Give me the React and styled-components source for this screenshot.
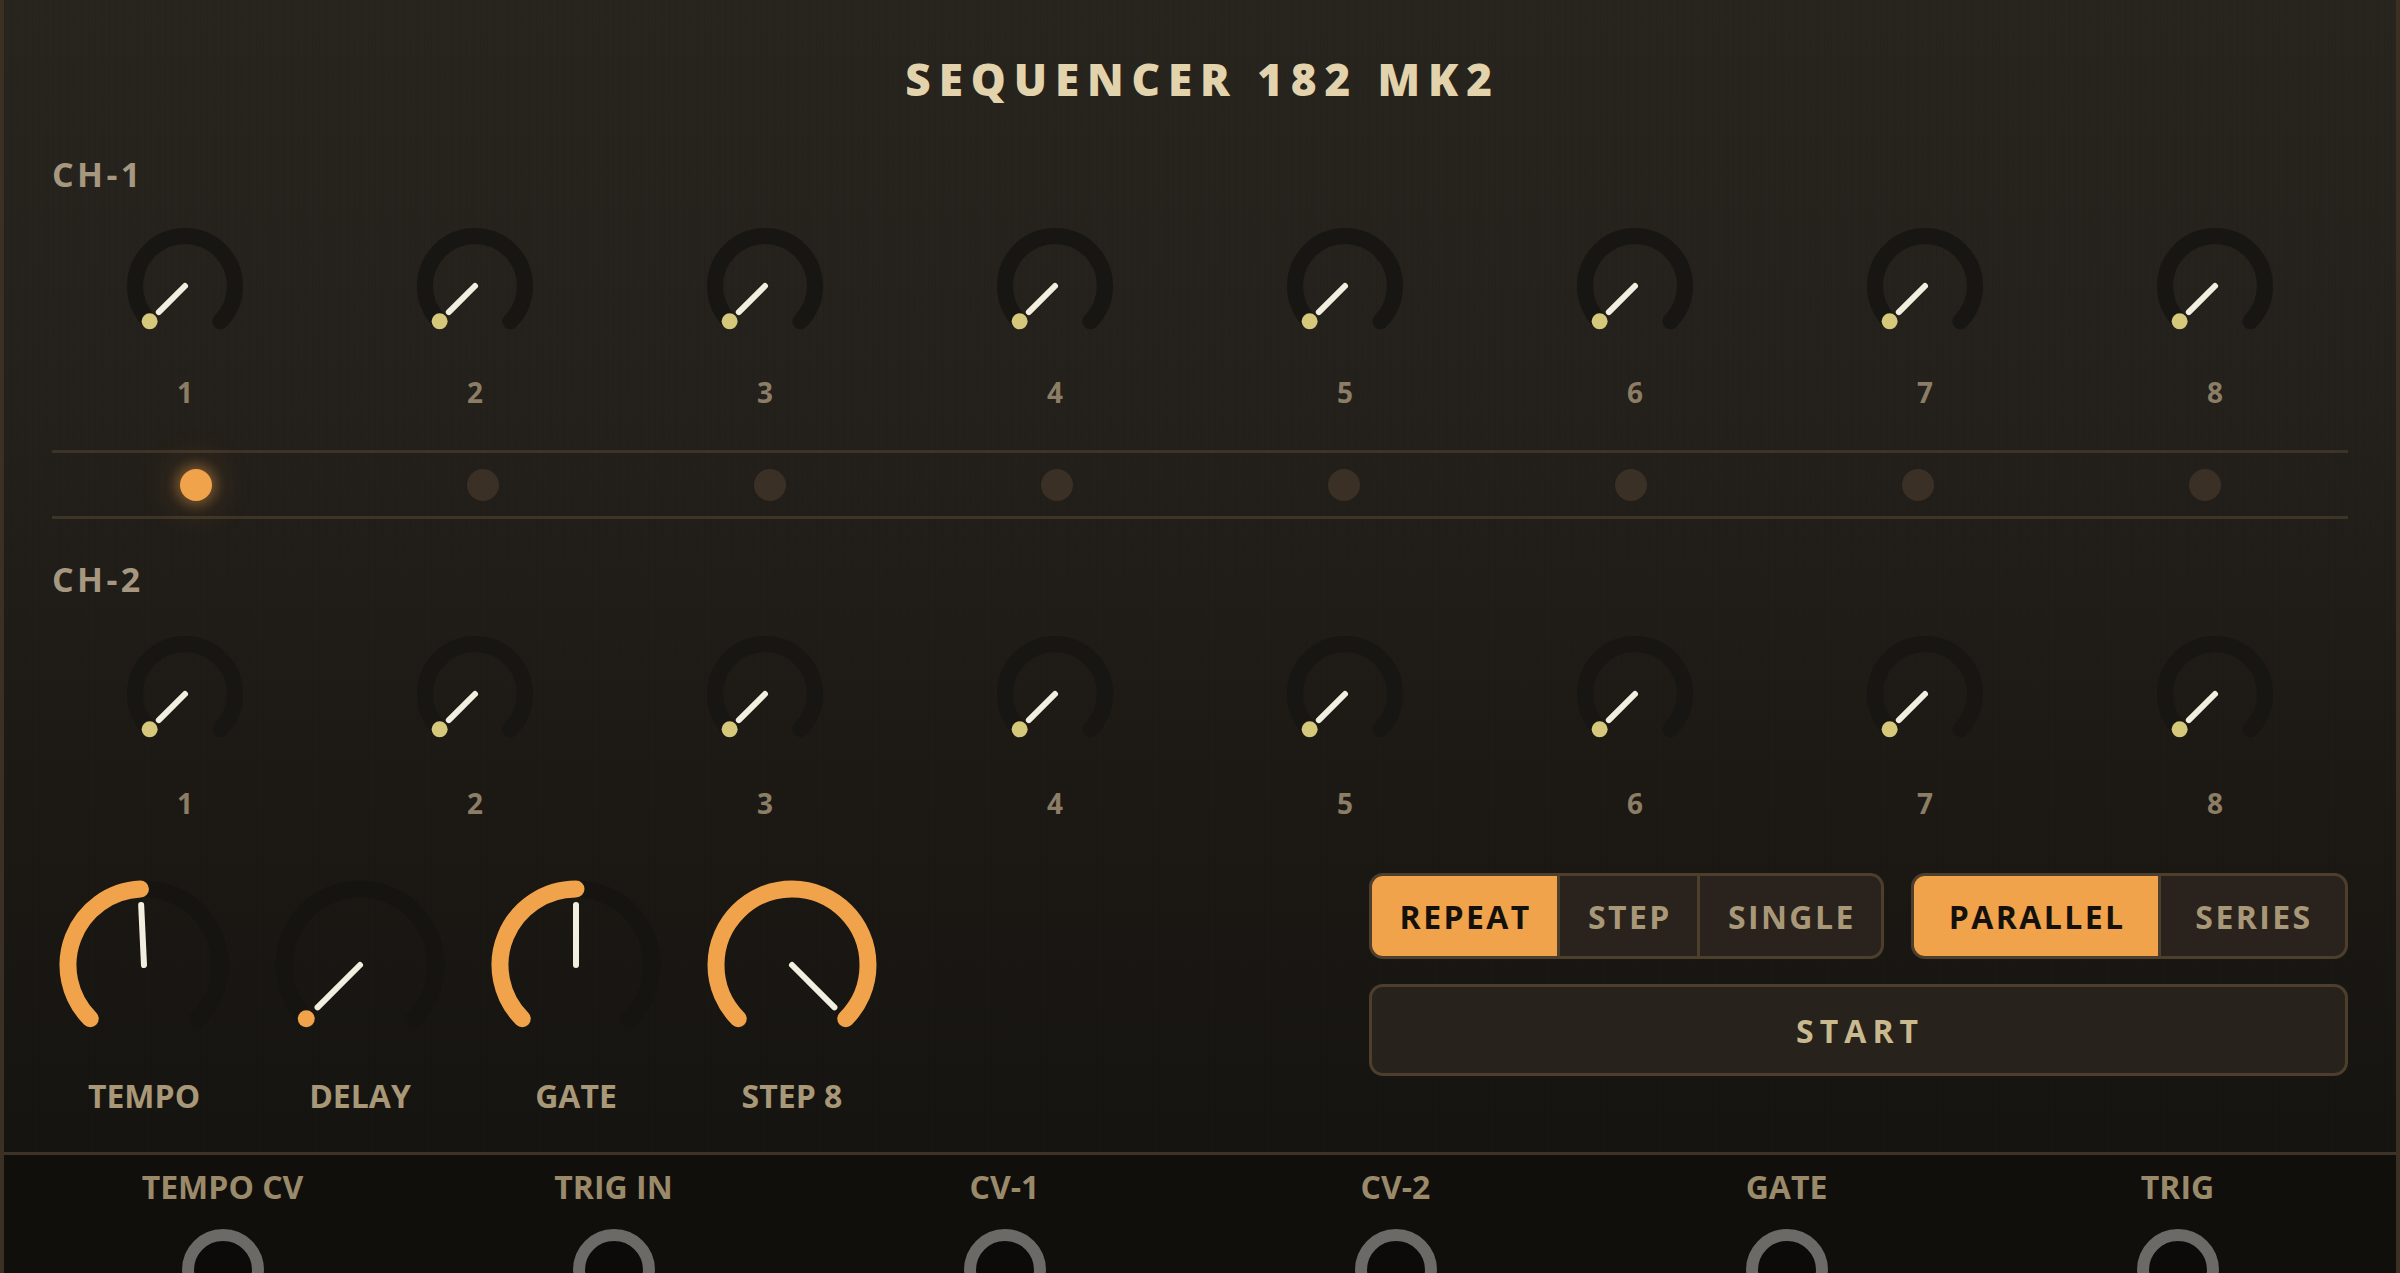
import React from 'react'
import styled, { createGlobalStyle } from 'styled-components'

const Global = createGlobalStyle`
  * { box-sizing: border-box; }
  body {
    margin: 0;
    background: #110f0c;
    font-family: "Open Sans", "Noto Sans", sans-serif;
  }
`

const ORANGE = '#f0a34b'

const Panel = styled.div`
  width: 100%;
  border-left: 4px solid #3a3024;
  border-right: 4px solid #3a3024;
  background: #110f0c;
`

const Face = styled.div`
  padding: 57px 48px 40px;
  background:
    repeating-linear-gradient(90deg, rgba(0,0,0,0.05) 0 1px, transparent 1px 7px),
    linear-gradient(180deg, #28241e 0%, #24201b 35%, #1d1a16 65%, #161410 100%);
`

const Title = styled.h1`
  margin: 0;
  text-align: center;
  font-size: 44px;
  line-height: 44px;
  font-weight: 800;
  letter-spacing: 0.18em;
  padding-left: 0.12em;
  color: #e2d3ad;
`

const Channel = styled.div`
  margin-top: ${p => p.$top}px;
`

const ChLabel = styled.div`
  font-size: 34px;
  line-height: 34px;
  font-weight: 700;
  letter-spacing: 0.1em;
  color: #a69880;
`

const KnobGrid = styled.div`
  display: grid;
  grid-template-columns: repeat(8, 1fr);
  column-gap: 24px;
  margin-top: ${p => p.$gap}px;
`

const KnobCell = styled.div`
  display: flex;
  flex-direction: column;
  align-items: center;
`

const StepNum = styled.div`
  margin-top: ${p => p.$gap}px;
  font-size: 28px;
  line-height: 28px;
  font-weight: 700;
  color: #8c7d65;
`

const StepRow = styled.div`
  display: grid;
  grid-template-columns: repeat(8, 1fr);
  align-items: center;
  justify-items: center;
  height: 69px;
  margin-top: 44px;
  border-top: 3px solid #3d3327;
  border-bottom: 3px solid #3d3327;
`

const Led = styled.div`
  width: 32px;
  height: 32px;
  border-radius: 50%;
  background: ${p => (p.$on ? ORANGE : '#3a3026')};
  box-shadow: ${p =>
    p.$on
      ? '0 0 12px 4px rgba(240,163,75,0.35), 0 0 34px 12px rgba(240,163,75,0.12)'
      : 'none'};
`

const Bottom = styled.div`
  display: flex;
  justify-content: space-between;
  align-items: flex-start;
  margin-top: 56px;
`

const BigKnobs = styled.div`
  display: flex;
  gap: 32px;
`

const BigCell = styled.div`
  width: 184px;
  display: flex;
  flex-direction: column;
  align-items: center;
`

const BigLabel = styled.div`
  margin-top: 23px;
  font-size: 32px;
  line-height: 32px;
  font-weight: 700;
  color: #a89878;
`

const Controls = styled.div`
  width: 979px;
  display: flex;
  flex-direction: column;
  gap: 25px;
`

const ModeRow = styled.div`
  display: flex;
  gap: 27px;
`

const Segmented = styled.div`
  flex: 1 1 auto;
  display: flex;
  height: 86px;
  border: 3px solid #4d3f2c;
  border-radius: 14px;
  overflow: hidden;
  background: #2a231d;
`

const Seg = styled.div`
  flex: 1 1 auto;
  display: flex;
  align-items: center;
  justify-content: center;
  padding: 0 12px 0 14px;
  font-size: 32px;
  font-weight: 700;
  letter-spacing: 0.075em;
  background: ${p => (p.$active ? ORANGE : 'transparent')};
  color: ${p => (p.$active ? '#14100c' : '#a89878')};
  & + & { border-left: 3px solid #4d3f2c; }
`

const StartButton = styled.div`
  height: 92px;
  display: flex;
  align-items: center;
  justify-content: center;
  border: 3px solid #4d3f2c;
  border-radius: 14px;
  background: #28221c;
  color: #c9b98f;
  font-size: 32px;
  font-weight: 700;
  letter-spacing: 0.19em;
  padding-left: 0.1em;
`

const Jacks = styled.div`
  display: grid;
  grid-template-columns: repeat(6, 1fr);
  padding: 16px 23px 60px;
  border-top: 3px solid #3d3327;
  background: #110f0c;
`

const JackCell = styled.div`
  display: flex;
  flex-direction: column;
  align-items: center;
  gap: 25px;
`

const JackLabel = styled.div`
  font-size: 32px;
  line-height: 32px;
  font-weight: 700;
  color: #9a8a6a;
`

const pt = (c, deg, rad) => [
  c + rad * Math.sin((deg * Math.PI) / 180),
  c - rad * Math.cos((deg * Math.PI) / 180),
]

const Knob = ({ size, r, stroke, value, accent, track, pointerLen }) => {
  const c = size / 2
  const ang = -135 + 270 * value
  const [sx, sy] = pt(c, -135, r)
  const [ex, ey] = pt(c, 135, r)
  const [vx, vy] = pt(c, ang, r)
  const [px, py] = pt(c, ang, pointerLen)
  const large = ang + 135 > 180 ? 1 : 0
  return (
    <svg width={size} height={size} viewBox={`0 0 ${size} ${size}`}>
      <path d={`M ${sx} ${sy} A ${r} ${r} 0 1 1 ${ex} ${ey}`} fill="none" stroke={track} strokeWidth={stroke} strokeLinecap="round" />
      {value > 0.001 ? (
        <path d={`M ${sx} ${sy} A ${r} ${r} 0 ${large} 1 ${vx} ${vy}`} fill="none" stroke={accent} strokeWidth={stroke} strokeLinecap="round" />
      ) : (
        <circle cx={sx} cy={sy} r={stroke / 2} fill={accent} />
      )}
      <line x1={c} y1={c} x2={px} y2={py} stroke="#f3efe0" strokeWidth="6" strokeLinecap="round" />
    </svg>
  )
}

const Jack = () => (
  <svg width="84" height="84" viewBox="0 0 84 84">
    <circle cx="42" cy="42" r="35" fill="#0d0b09" stroke="#6b6a66" strokeWidth="12" />
  </svg>
)

const steps = [1, 2, 3, 4, 5, 6, 7, 8]

const ChannelRow = ({ name, top, gap, numGap }) => (
  <Channel $top={top}>
    <ChLabel>{name}</ChLabel>
    <KnobGrid $gap={gap}>
      {steps.map(n => (
        <KnobCell key={n}>
          <Knob size={140} r={50} stroke={16} value={0} accent="#d6c87a" track="#181612" pointerLen={37} />
          <StepNum $gap={numGap}>{n}</StepNum>
        </KnobCell>
      ))}
    </KnobGrid>
  </Channel>
)

const bigKnobs = [
  { label: 'TEMPO', value: 0.49 },
  { label: 'DELAY', value: 0 },
  { label: 'GATE', value: 0.5 },
  { label: 'STEP 8', value: 1 },
]

const jacks = ['TEMPO CV', 'TRIG IN', 'CV-1', 'CV-2', 'GATE', 'TRIG']

const App = () => {
  return (
    <Panel>
      <Global />
      <Face>
        <Title>SEQUENCER 182 MK2</Title>
        <ChannelRow name="CH-1" top={56} gap={25} numGap={22} />
        <StepRow>
          {steps.map(n => (
            <Led key={n} $on={n === 1} />
          ))}
        </StepRow>
        <ChannelRow name="CH-2" top={43} gap={28} numGap={25} />
        <Bottom>
          <BigKnobs>
            {bigKnobs.map(k => (
              <BigCell key={k.label}>
                <Knob size={184} r={76} stroke={17} value={k.value} accent={ORANGE} track="#161410" pointerLen={60} />
                <BigLabel>{k.label}</BigLabel>
              </BigCell>
            ))}
          </BigKnobs>
          <Controls>
            <ModeRow>
              <Segmented>
                <Seg $active>REPEAT</Seg>
                <Seg>STEP</Seg>
                <Seg>SINGLE</Seg>
              </Segmented>
              <Segmented>
                <Seg $active>PARALLEL</Seg>
                <Seg>SERIES</Seg>
              </Segmented>
            </ModeRow>
            <StartButton>START</StartButton>
          </Controls>
        </Bottom>
      </Face>
      <Jacks>
        {jacks.map(j => (
          <JackCell key={j}>
            <JackLabel>{j}</JackLabel>
            <Jack />
          </JackCell>
        ))}
      </Jacks>
    </Panel>
  )
}

export default App
